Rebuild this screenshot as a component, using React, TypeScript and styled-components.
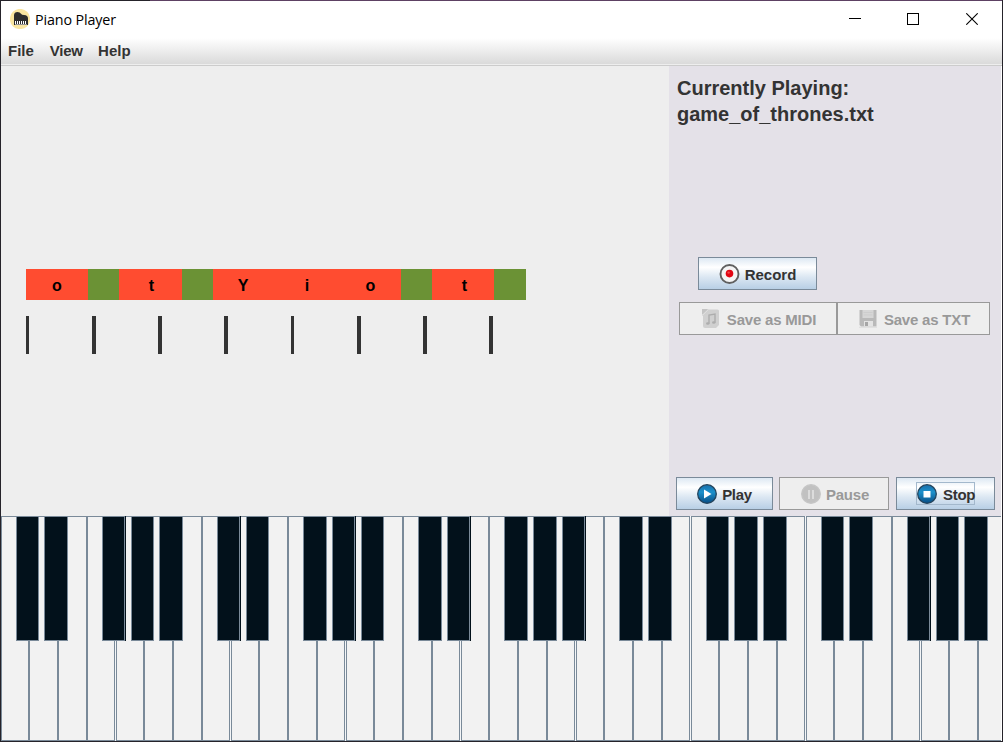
import React from "react";
import styled, { createGlobalStyle } from "styled-components";

const GlobalStyle = createGlobalStyle`
  * { box-sizing: border-box; }
  body { margin: 0; background: #eee; overflow: hidden; }
`;

const Window = styled.div`
  width: 1003px;
  height: 742px;
  display: flex;
  flex-direction: column;
  border: solid #25232a;
  border-width: 0 1px 1px;
  background: #fff;
  color: #333;
  font-family: "Liberation Sans", Arial, sans-serif;
  font-weight: bold;
`;

const TopEdge = styled.div`
  height: 1px;
  flex: none;
  background: linear-gradient(90deg, #25232a 149px, #5d4163 149px);
`;

const TitleBar = styled.header`
  height: 37px;
  flex: none;
  display: flex;
  align-items: center;
  padding: 0 1px 0 9px;
`;

const Title = styled.h1`
  margin: 1px 0 0 5px;
  flex: 1;
  color: #000;
  font: 400 14.3px/20px "Open Sans", "Noto Sans", sans-serif;
  letter-spacing: -0.12px;
`;

const WindowButton = styled.button`
  width: 58px;
  height: 36px;
  margin-bottom: 1px;
  padding: 0;
  border: 0;
  background: none;
  display: flex;
  align-items: center;
  justify-content: center;
  &:last-child { width: 59px; }
`;

const MenuBar = styled.nav`
  height: 28px;
  flex: none;
  display: flex;
  gap: 16px;
  padding: 4px 7px 0;
  font-size: 15px;
  line-height: 17px;
  background: linear-gradient(#fff, #dadada 26px, #eee 26px, #eee 27px, #ccc 27px);
`;

const MenuItem = styled.span`
  &:nth-child(2) { letter-spacing: -0.3px; }
  &:nth-child(3) { margin-left: -0.5px; }
`;

const Main = styled.main`
  height: 450px;
  flex: none;
  display: flex;
  margin-right: 1px;
`;

const Score = styled.section`
  width: 668px;
  padding: 203px 0 0 25px;
  background: #eee;
`;

const Notes = styled.div`
  display: flex;
  height: 31px;
`;

const Note = styled.div<{ $w: number; $rest?: boolean; $inset?: number }>`
  width: ${(p) => p.$w}px;
  padding-left: ${(p) => p.$inset ?? 1}px;
  background: ${(p) => (p.$rest ? "#6b9235" : "#ff4c30")};
  color: #000;
  font-size: 16px;
  line-height: 33px;
  text-align: center;
`;

const Beats = styled.div`
  display: flex;
  margin-top: 16px;
`;

const Beat = styled.div<{ $w: number; $gap: number }>`
  width: ${(p) => p.$w}px;
  height: 38px;
  margin-right: ${(p) => p.$gap}px;
  background: #333;
`;

const SidePanel = styled.aside`
  flex: 1;
  display: flex;
  flex-direction: column;
  background: #e4e1e8;
`;

const NowPlaying = styled.h2`
  height: 191px;
  margin: 0;
  padding: 9px 0 0 8px;
  font-size: 20px;
  line-height: 26px;
`;

const RecordRow = styled.div`
  height: 45px;
  padding-left: 29px;
`;

const SaveRow = styled.div`
  display: flex;
  height: 175px;
  padding-left: 10px;
`;

const Transport = styled.div`
  display: flex;
  padding-left: 7px;
`;

const Button = styled.button<{ $w: number; $after?: number; $gap?: number; $tight?: number }>`
  width: ${(p) => p.$w}px;
  height: 33px;
  flex: none;
  margin: 0 ${(p) => p.$after ?? 0}px 0 0;
  padding: 0;
  display: flex;
  align-items: center;
  justify-content: center;
  gap: ${(p) => p.$gap ?? 5}px;
  border: 1px solid #7a8a99;
  background: linear-gradient(#dde8f3, #fff 30%, #dde8f3 60%, #b8cfe5);
  color: #333;
  font: bold 15px/17px "Liberation Sans", Arial, sans-serif;
  letter-spacing: ${(p) => -(p.$tight ?? 0)}px;
  white-space: nowrap;
  &:disabled {
    padding-left: 2px;
    border-color: #999;
    background: #eee;
    color: #999;
  }
  svg { flex: none; }
`;

const Label = styled.span`
  padding-top: 2px;
`;

const Focus = styled.span`
  display: flex;
  align-items: center;
  gap: 6px;
  height: 23px;
  width: 59px;
  border: 1px solid #a3b8cc;
`;

const Keyboard = styled.section`
  position: relative;
  flex: none;
  display: flex;
  height: 225px;
  width: 1000px;
  overflow: hidden;
  background: #f4f6f8;
`;

const WhiteKey = styled.div<{ $w: number; $gap: number }>`
  flex: none;
  width: ${(p) => p.$w}px;
  margin-right: ${(p) => p.$gap}px;
  border: 1px solid #7a8a99;
  background: #f2f2f2;
`;

const BlackKey = styled.div<{ $x: number; $w: number; $shade: boolean }>`
  position: absolute;
  top: 0;
  left: ${(p) => p.$x}px;
  width: ${(p) => p.$w}px;
  height: 125px;
  border: 1px solid #7a8a99;
  background: #02111b;
  box-shadow: ${(p) => (p.$shade ? "1px 0 #02111b" : "none")};
`;

const IconSlot = styled.span`
  display: flex;
  margin-bottom: 1px;
`;

const AppIcon = () => (
  <svg width="20" height="20" viewBox="0 0 20 20">
    <circle cx="10" cy="10" r="10.1" fill="#f9e5a0" />
    <path d="M4 16V6Q4.3 3 7.5 3Q10 3 11 4.8Q11.7 6 14 6Q18 6.3 18 9.5V16Z" fill="#2d2d2d" />
    <path d="M5 12H17V15.5H5Z" fill="#fff" />
    <path d="M6.5 12V15M8.5 12V15M10.5 12V15M12.5 12V15M14.5 12V15M16.5 12V15" stroke="#2d2d2d" />
  </svg>
);

const RecordIcon = () => (
  <svg width="21" height="20" viewBox="0 0 21 20">
    <circle cx="10.5" cy="10" r="9" fill="#f5f5f5" stroke="#606060" strokeWidth="1.9" />
    <circle cx="10.5" cy="9.6" r="3.8" fill="#e30613" />
    <circle cx="9.6" cy="8.6" r="1.2" fill="#f04a4a" />
  </svg>
);

const Disc = ({ children, muted }: { children: React.ReactNode; muted?: boolean }) => (
  <svg width="20" height="20" viewBox="0 0 20 20">
    <defs>
      <linearGradient id="disc" x1="0" y1="0" x2="0" y2="1">
        <stop offset="0" stopColor="#176eaa" />
        <stop offset=".4" stopColor="#1c91cc" />
        <stop offset="1" stopColor="#084d85" />
      </linearGradient>
    </defs>
    <circle cx="10" cy="10" r="9.3" fill={muted ? "#c1c1c1" : "url(#disc)"} stroke={muted ? "#c6c6c6" : "#25445c"} strokeWidth="1.3" />
    {children}
  </svg>
);

const MidiIcon = () => (
  <svg width="18" height="20" viewBox="0 0 18 20">
    <path d="M5 .5H15.5Q17 .5 17 2V16L14 19H3Q1 19 1 17V5Z" fill="#d0d0d0" />
    <path d="M0 6V0H6Z" fill="#c4c4c4" />
    <path d="M0 7L7 0" stroke="#ddd" />
    <path d="M7 14.5V6L13 5V13.5" fill="none" stroke="#adadad" strokeWidth="1.4" />
    <ellipse cx="5.8" cy="14.5" rx="1.8" ry="1.3" fill="#adadad" />
    <ellipse cx="11.8" cy="13.5" rx="1.8" ry="1.3" fill="#adadad" />
  </svg>
);

const DiskIcon = () => (
  <svg width="18" height="19" viewBox="0 0 18 19">
    <path d="M.5 1H17.5V17.5H2L.5 16Z" fill="#b9b9b9" />
    <path d="M3.5 1H14.5V9H3.5Z" fill="#d6d6d6" />
    <path d="M4.5 3.5H13.5M4.5 6H13.5" stroke="#cdcdcd" />
    <path d="M5 12H14V17.5H5Z" fill="#e3e3e3" />
    <path d="M6 13H9V17H6Z" fill="#a6a6a6" />
    <path d="M0 18.3H18" stroke="#ddd" />
  </svg>
);

const notes: { w: number; key?: string; inset?: number }[] = [
  { w: 62, key: "o", inset: 0 }, { w: 31 }, { w: 63, key: "t", inset: 2 }, { w: 31 },
  { w: 60, key: "Y", inset: 0 }, { w: 65, key: "i", inset: 3 }, { w: 63, key: "o", inset: 2 },
  { w: 31 }, { w: 62, key: "t", inset: 3 }, { w: 32 },
];

const beats = [
  { w: 3, gap: 63 }, { w: 4, gap: 62 }, { w: 4, gap: 62 }, { w: 4, gap: 63 },
  { w: 3, gap: 63 }, { w: 4, gap: 62 }, { w: 4, gap: 62 }, { w: 4, gap: 0 },
];

const KEY_PITCH = 28.75;
const edge = (k: number) => Math.floor(KEY_PITCH * k);
const whiteKeys = Array.from({ length: 35 }, (_, k) => {
  const gap = (k + 1) % 4 === 0 ? 1 : 0;
  return { w: edge(k + 1) - edge(k) - gap, gap };
});
const blackKeys = Array.from({ length: 35 }, (_, k) => k)
  .filter((k) => [1, 2, 4, 5, 6].includes(k % 7))
  .map((k) => ({
    x: Math.floor(KEY_PITCH * k - 13.6),
    w: k % 4 < 2 ? 23 : 24,
    shade: k % 4 === 0,
  }));

export default function App() {
  return (
    <Window>
      <GlobalStyle />
      <TopEdge />
      <TitleBar>
        <IconSlot><AppIcon /></IconSlot>
        <Title>Piano Player</Title>
        <WindowButton aria-label="Minimize">
          <svg width="12" height="12"><path d="M0 5.5H12" stroke="#000" /></svg>
        </WindowButton>
        <WindowButton aria-label="Maximize">
          <svg width="12" height="12"><rect x=".5" y=".5" width="11" height="11" fill="none" stroke="#000" /></svg>
        </WindowButton>
        <WindowButton aria-label="Close">
          <svg width="12" height="12"><path d="M.3 .3L11.7 11.7M11.7 .3L.3 11.7" stroke="#000" strokeWidth="1.1" /></svg>
        </WindowButton>
      </TitleBar>
      <MenuBar>
        <MenuItem>File</MenuItem>
        <MenuItem>View</MenuItem>
        <MenuItem>Help</MenuItem>
      </MenuBar>
      <Main>
        <Score>
          <Notes>
            {notes.map((n, i) => (
              <Note key={i} $w={n.w} $rest={!n.key} $inset={n.inset}>{n.key}</Note>
            ))}
          </Notes>
          <Beats>
            {beats.map((b, i) => <Beat key={i} $w={b.w} $gap={b.gap} />)}
          </Beats>
        </Score>
        <SidePanel>
          <NowPlaying>Currently Playing:<br />game_of_thrones.txt</NowPlaying>
          <RecordRow>
            <Button $w={119}><RecordIcon /><Label>Record</Label></Button>
          </RecordRow>
          <SaveRow>
            <Button $w={158} $gap={7} $tight={0.2} disabled><MidiIcon /><Label>Save as MIDI</Label></Button>
            <Button $w={153} $gap={7} $tight={0.2} disabled><DiskIcon /><Label>Save as TXT</Label></Button>
          </SaveRow>
          <Transport>
            <Button $w={97} $after={6} $tight={0.3}>
              <Disc><path d="M7 5.5L14.5 10L7 14.5Z" fill="#fff" /></Disc>
              <Label>Play</Label>
            </Button>
            <Button $w={110} $after={7} $tight={0.2} disabled>
              <Disc muted><path d="M8 6V15M12 6V15" stroke="#dcdcdc" strokeWidth="2" /></Disc>
              <Label>Pause</Label>
            </Button>
            <Button $w={99} $tight={0.3}>
              <Focus>
                <Disc><rect x="6.5" y="7" width="7" height="6.5" fill="#fff" /></Disc>
                <Label>Stop</Label>
              </Focus>
            </Button>
          </Transport>
        </SidePanel>
      </Main>
      <Keyboard>
        {whiteKeys.map((k, i) => <WhiteKey key={i} $w={k.w} $gap={k.gap} />)}
        {blackKeys.map((k) => <BlackKey key={k.x} $x={k.x} $w={k.w} $shade={k.shade} />)}
      </Keyboard>
    </Window>
  );
}
